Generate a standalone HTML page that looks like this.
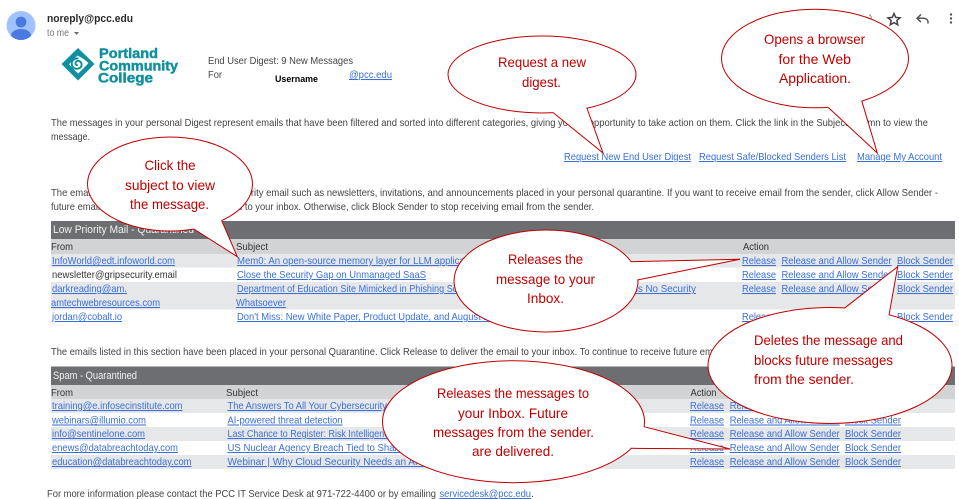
<!DOCTYPE html>
<html><head><meta charset="utf-8"><style>
html,body{margin:0;padding:0;background:#fff;width:959px;height:499px;overflow:hidden}
svg{display:block;filter:blur(.3px)}
text{font-family:"Liberation Sans",Arial,sans-serif;font-size:10.4px;fill:#444}
.l{fill:#3a6fd8;text-decoration:underline}
.d{fill:#333}
.c{font-size:13.6px;fill:#c00000}
.w{fill:#f2f2f2;font-size:10.6px}
.s{fill:#fff;stroke:#c00000;stroke-width:1}
.f{fill:#fff;stroke:none}
.t{fill:none;stroke:#c00000;stroke-width:1}
.g{font-size:14px;font-weight:bold;fill:#10909f;stroke:#10909f;stroke-width:.45px}
</style></head><body>
<svg width="959" height="499" viewBox="0 0 959 499" xmlns="http://www.w3.org/2000/svg">
<!-- gmail header -->
<clipPath id="av"><circle cx="21" cy="25.5" r="14.5"/></clipPath>
<circle cx="21" cy="25.5" r="14.5" fill="#a0c3ff"/>
<g clip-path="url(#av)" fill="#4a79e0"><circle cx="21" cy="22" r="5.4"/><ellipse cx="21" cy="35.5" rx="10" ry="6.5"/></g>
<text x="47" y="22" style="font-size:11.2px;font-weight:bold;fill:#2a2a2a" textLength="86" lengthAdjust="spacingAndGlyphs">noreply@pcc.edu</text>
<text x="47" y="36" style="font-size:9.8px;fill:#777" textLength="22" lengthAdjust="spacingAndGlyphs">to me</text>
<path d="M74 32h5l-2.5 2.8z" fill="#666"/>
<path d="M894 13.5l1.7 3.9 4.3.4-3.2 2.8 1 4.2-3.8-2.2-3.8 2.2 1-4.2-3.2-2.8 4.3-.4z" fill="none" stroke="#444" stroke-width="1.5"/>
<path d="M928 23.5v-1.2c0-2.6-2-4-4.500-4h-6M921 14.500l-4 3.800 4 3.800" fill="none" stroke="#555" stroke-width="1.500"/>
<g fill="#555"><circle cx="951" cy="14.500" r="1.200"/><circle cx="951" cy="18.500" r="1.200"/><circle cx="951" cy="22.500" r="1.200"/></g>
<path d="M869 14.500c2 1 2.600 2.500 2 4.500" fill="none" stroke="#888"/>
<!-- logo -->
<path d="M78 48L94.500 64 78 80.500 61.500 64z" fill="#10909f"/>
<path d="M77.500 55.500c2.800 1.600 5 2.800 6.800 4 1.800 1.200 3 2.300 4.200 3.800-1.300 1.300-3 3-4.800 4.800-2 2-3.800 3.700-5.400 5.400-2.800-2.300-6-5.500-9.300-9.200 2.800-3 5.500-6 8.500-8.800z" fill="#fff"/>
<path d="M78.500 58.500c-3.500-.6-6.700 1.500-6.800 5 0 3.200 2.500 5.500 5.500 5.300 3-.2 4.800-2.500 4.300-5-.4-2-2.200-3.300-4-2.900-1.700.4-2.400 2-1.900 3.200.4 1 1.500 1.300 2.200.7" fill="none" stroke="#10909f" stroke-width="1.900"/>
<text x="99" y="58" class="g" textLength="59" lengthAdjust="spacingAndGlyphs">Portland</text>
<text x="99" y="70.500" class="g" textLength="79" lengthAdjust="spacingAndGlyphs">Community</text>
<text x="98" y="82.500" class="g" textLength="55" lengthAdjust="spacingAndGlyphs">College</text>
<text x="208" y="64" textLength="145" lengthAdjust="spacingAndGlyphs">End User Digest: 9 New Messages</text>
<text x="208" y="78" textLength="14" lengthAdjust="spacingAndGlyphs">For</text>
<text x="275" y="82" style="font-weight:bold;fill:#000;font-size:9.500px" textLength="43" lengthAdjust="spacingAndGlyphs">Username</text>
<text x="349" y="78" class="l" textLength="43" lengthAdjust="spacingAndGlyphs">@pcc.edu</text>
<!-- paragraph 1 -->
<text x="51" y="126" textLength="877" lengthAdjust="spacingAndGlyphs">The messages in your personal Digest represent emails that have been filtered and sorted into different categories, giving you an opportunity to take action on them. Click the link in the Subject column to view the</text>
<text x="51" y="140" textLength="39" lengthAdjust="spacingAndGlyphs">message.</text>
<text x="564" y="160" class="l" textLength="127" lengthAdjust="spacingAndGlyphs">Request New End User Digest</text>
<text x="699" y="160" class="l" textLength="147" lengthAdjust="spacingAndGlyphs">Request Safe/Blocked Senders List</text>
<text x="857" y="160" class="l" textLength="85" lengthAdjust="spacingAndGlyphs">Manage My Account</text>
<!-- paragraph 2 -->
<text x="51" y="196" textLength="887" lengthAdjust="spacingAndGlyphs">The emails listed in this section contain low priority email such as newsletters, invitations, and announcements placed in your personal quarantine. If you want to receive email from the sender, click Allow Sender -</text>
<text x="51" y="210" textLength="543" lengthAdjust="spacingAndGlyphs">future emails from the sender will be delivered to your inbox. Otherwise, click Block Sender to stop receiving email from the sender.</text>
<!-- table 1 -->
<rect x="51" y="221" width="904" height="18" fill="#6d6e71"/>
<rect x="51" y="239" width="904" height="15" fill="#d1d3d4"/>
<rect x="51" y="254" width="904" height="13.500" fill="#e6e7e8"/>
<rect x="51" y="282" width="904" height="27.500" fill="#e6e7e8"/>
<text x="53" y="233" class="w" textLength="141" lengthAdjust="spacingAndGlyphs">Low Priority Mail - Quarantined</text>
<text x="51" y="250" class="d" textLength="22" lengthAdjust="spacingAndGlyphs">From</text>
<text x="236" y="250" class="d" textLength="32" lengthAdjust="spacingAndGlyphs">Subject</text>
<text x="743" y="250" class="d" textLength="26" lengthAdjust="spacingAndGlyphs">Action</text>
<text x="52" y="264" class="l" textLength="123" lengthAdjust="spacingAndGlyphs">InfoWorld@edt.infoworld.com</text>
<text x="52" y="278" class="d" textLength="125" lengthAdjust="spacingAndGlyphs">newsletter@gripsecurity.email</text>
<text x="52" y="292" class="l" textLength="75" lengthAdjust="spacingAndGlyphs">darkreading@am.</text>
<text x="51" y="306" class="l" textLength="109" lengthAdjust="spacingAndGlyphs">amtechwebresources.com</text>
<text x="52" y="320" class="l" textLength="70" lengthAdjust="spacingAndGlyphs">jordan@cobalt.io</text>
<text x="237" y="264" class="l" textLength="248" lengthAdjust="spacingAndGlyphs">Mem0: An open-source memory layer for LLM applications</text>
<text x="237" y="278" class="l" textLength="189" lengthAdjust="spacingAndGlyphs">Close the Security Gap on Unmanaged SaaS</text>
<text x="237" y="292" class="l" textLength="233" lengthAdjust="spacingAndGlyphs">Department of Education Site Mimicked in Phishing Scam</text>
<text x="633" y="292" class="l" textLength="63" lengthAdjust="spacingAndGlyphs">ss No Security</text>
<text x="236" y="306" class="l" textLength="50" lengthAdjust="spacingAndGlyphs">Whatsoever</text>
<text x="237" y="320" class="l" textLength="275" lengthAdjust="spacingAndGlyphs">Don't Miss: New White Paper, Product Update, and August Events</text>
<text x="742" y="264" class="l" textLength="34" lengthAdjust="spacingAndGlyphs">Release</text><text x="781.500" y="264" class="l" textLength="110" lengthAdjust="spacingAndGlyphs">Release and Allow Sender</text><text x="897" y="264" class="l" textLength="56" lengthAdjust="spacingAndGlyphs">Block Sender</text>
<text x="742" y="278" class="l" textLength="34" lengthAdjust="spacingAndGlyphs">Release</text><text x="781.500" y="278" class="l" textLength="110" lengthAdjust="spacingAndGlyphs">Release and Allow Sender</text><text x="897" y="278" class="l" textLength="56" lengthAdjust="spacingAndGlyphs">Block Sender</text>
<text x="742" y="292" class="l" textLength="34" lengthAdjust="spacingAndGlyphs">Release</text><text x="781.500" y="292" class="l" textLength="110" lengthAdjust="spacingAndGlyphs">Release and Allow Sender</text><text x="897" y="292" class="l" textLength="56" lengthAdjust="spacingAndGlyphs">Block Sender</text>
<text x="742" y="320" class="l" textLength="34" lengthAdjust="spacingAndGlyphs">Release</text><text x="781.500" y="320" class="l" textLength="110" lengthAdjust="spacingAndGlyphs">Release and Allow Sender</text><text x="897" y="320" class="l" textLength="56" lengthAdjust="spacingAndGlyphs">Block Sender</text>
<!-- paragraph 3 -->
<text x="51" y="355" textLength="850" lengthAdjust="spacingAndGlyphs">The emails listed in this section have been placed in your personal Quarantine. Click Release to deliver the email to your inbox. To continue to receive future emails from this sender, click Release and Allow.</text>
<!-- table 2 -->
<rect x="51" y="366.500" width="904" height="18.500" fill="#6d6e71"/>
<rect x="51" y="385" width="904" height="14" fill="#d1d3d4"/>
<rect x="51" y="399" width="904" height="14" fill="#e6e7e8"/>
<rect x="51" y="427" width="904" height="14" fill="#e6e7e8"/>
<rect x="51" y="455" width="904" height="14" fill="#e6e7e8"/>
<text x="53" y="379" class="w" textLength="84" lengthAdjust="spacingAndGlyphs">Spam - Quarantined</text>
<text x="51" y="396" class="d" textLength="22" lengthAdjust="spacingAndGlyphs">From</text>
<text x="226" y="396" class="d" textLength="32" lengthAdjust="spacingAndGlyphs">Subject</text>
<text x="690.500" y="396" class="d" textLength="26" lengthAdjust="spacingAndGlyphs">Action</text>
<text x="52" y="409" class="l" textLength="130.500" lengthAdjust="spacingAndGlyphs">training@e.infosecinstitute.com</text>
<text x="52" y="423.500" class="l" textLength="94" lengthAdjust="spacingAndGlyphs">webinars@illumio.com</text>
<text x="52" y="437" class="l" textLength="93" lengthAdjust="spacingAndGlyphs">info@sentinelone.com</text>
<text x="52" y="451" class="l" textLength="126" lengthAdjust="spacingAndGlyphs">enews@databreachtoday.com</text>
<text x="52" y="465" class="l" textLength="139.500" lengthAdjust="spacingAndGlyphs">education@databreachtoday.com</text>
<text x="227.500" y="409" class="l" textLength="204" lengthAdjust="spacingAndGlyphs">The Answers To All Your Cybersecurity Questions</text>
<text x="227.500" y="423.500" class="l" textLength="115" lengthAdjust="spacingAndGlyphs">AI-powered threat detection</text>
<text x="227.500" y="437" class="l" textLength="199" lengthAdjust="spacingAndGlyphs">Last Chance to Register: Risk Intelligence Summit</text>
<text x="227.500" y="451" class="l" textLength="225" lengthAdjust="spacingAndGlyphs">US Nuclear Agency Breach Tied to SharePoint Flaws</text>
<text x="227.500" y="465" class="l" textLength="258" lengthAdjust="spacingAndGlyphs">Webinar | Why Cloud Security Needs an AI-First Approach</text>
<text x="690" y="409" class="l" textLength="34" lengthAdjust="spacingAndGlyphs">Release</text><text x="729.700" y="409" class="l" textLength="110" lengthAdjust="spacingAndGlyphs">Release and Allow Sender</text><text x="845" y="409" class="l" textLength="56" lengthAdjust="spacingAndGlyphs">Block Sender</text>
<text x="690" y="423.500" class="l" textLength="34" lengthAdjust="spacingAndGlyphs">Release</text><text x="729.700" y="423.500" class="l" textLength="110" lengthAdjust="spacingAndGlyphs">Release and Allow Sender</text><text x="845" y="423.500" class="l" textLength="56" lengthAdjust="spacingAndGlyphs">Block Sender</text>
<text x="690" y="437" class="l" textLength="34" lengthAdjust="spacingAndGlyphs">Release</text><text x="729.700" y="437" class="l" textLength="110" lengthAdjust="spacingAndGlyphs">Release and Allow Sender</text><text x="845" y="437" class="l" textLength="56" lengthAdjust="spacingAndGlyphs">Block Sender</text>
<text x="690" y="451" class="l" textLength="34" lengthAdjust="spacingAndGlyphs">Release</text><text x="729.700" y="451" class="l" textLength="110" lengthAdjust="spacingAndGlyphs">Release and Allow Sender</text><text x="845" y="451" class="l" textLength="56" lengthAdjust="spacingAndGlyphs">Block Sender</text>
<text x="690" y="465" class="l" textLength="34" lengthAdjust="spacingAndGlyphs">Release</text><text x="729.700" y="465" class="l" textLength="110" lengthAdjust="spacingAndGlyphs">Release and Allow Sender</text><text x="845" y="465" class="l" textLength="56" lengthAdjust="spacingAndGlyphs">Block Sender</text>
<!-- footer -->
<text x="47" y="497" textLength="389" lengthAdjust="spacingAndGlyphs">For more information please contact the PCC IT Service Desk at 971-722-4400 or by emailing</text>
<text x="439.500" y="497" class="l" textLength="91.500" lengthAdjust="spacingAndGlyphs">servicedesk@pcc.edu</text>
<text x="531" y="497">.</text>
<!-- callouts: ellipse, white cover wedge, tail strokes -->
<ellipse class="s" cx="542" cy="74.500" rx="94" ry="38.500"/>
<path class="f" d="M553 112.500L603 153 586.700 107.500 542 74.500z"/>
<path class="t" d="M553 112.500L603 153 586.700 107.500"/>
<ellipse class="s" cx="815" cy="58.500" rx="93.500" ry="49.300"/>
<path class="f" d="M828.300 107.500L877.300 153 861.700 100.700 815 58.500z"/>
<path class="t" d="M828.300 107.500L877.300 153 861.700 100.700"/>
<ellipse class="s" cx="170" cy="184" rx="82.500" ry="47"/>
<path class="f" d="M194.300 229.300L237.300 256.700 221.700 220.700 170 184z"/>
<path class="t" d="M194.300 229.300L237.300 256.700 221.700 220.700"/>
<ellipse class="s" cx="546" cy="281" rx="92" ry="51"/>
<path class="f" d="M630.700 261.700L740 259.300 637.300 280 546 281z"/>
<path class="t" d="M630.700 261.700L740 259.300 637.300 280"/>
<ellipse class="s" cx="830" cy="365.500" rx="122" ry="58"/>
<path class="f" d="M844.300 308.300L897.700 266.700 889 315 830 365.500z"/>
<path class="t" d="M844.300 308.300L897.700 266.700 889 315"/>
<ellipse class="s" cx="513.500" cy="421.700" rx="131" ry="61"/>
<path class="f" d="M644 426.700L730 449 630.700 448.300 513.500 421.700z"/>
<path class="t" d="M644 426.700L730 449 630.700 448.300"/>
<text x="498" y="67" class="c" textLength="88" lengthAdjust="spacingAndGlyphs">Request a new</text>
<text x="522" y="87" class="c" textLength="39" lengthAdjust="spacingAndGlyphs">digest.</text>
<text x="764" y="44" class="c" textLength="101" lengthAdjust="spacingAndGlyphs">Opens a browser</text>
<text x="778.500" y="64" class="c" textLength="72.500" lengthAdjust="spacingAndGlyphs">for the Web</text>
<text x="779" y="83" class="c" textLength="72" lengthAdjust="spacingAndGlyphs">Application.</text>
<text x="144.500" y="170" class="c" textLength="51" lengthAdjust="spacingAndGlyphs">Click the</text>
<text x="125" y="190" class="c" textLength="90" lengthAdjust="spacingAndGlyphs">subject to view</text>
<text x="130" y="209" class="c" textLength="79" lengthAdjust="spacingAndGlyphs">the message.</text>
<text x="508" y="264" class="c" textLength="75" lengthAdjust="spacingAndGlyphs">Releases the</text>
<text x="496" y="284" class="c" textLength="99" lengthAdjust="spacingAndGlyphs">message to your</text>
<text x="527" y="303" class="c" textLength="37" lengthAdjust="spacingAndGlyphs">Inbox.</text>
<text x="754" y="345" class="c" textLength="149" lengthAdjust="spacingAndGlyphs">Deletes the message and</text>
<text x="754" y="365" class="c" textLength="139" lengthAdjust="spacingAndGlyphs">blocks future messages</text>
<text x="754" y="384" class="c" textLength="100" lengthAdjust="spacingAndGlyphs">from the sender.</text>
<text x="437" y="398" class="c" textLength="152" lengthAdjust="spacingAndGlyphs">Releases the messages to</text>
<text x="458" y="418" class="c" textLength="110" lengthAdjust="spacingAndGlyphs">your Inbox. Future</text>
<text x="433" y="437" class="c" textLength="161" lengthAdjust="spacingAndGlyphs">messages from the sender.</text>
<text x="472" y="456" class="c" textLength="82" lengthAdjust="spacingAndGlyphs">are delivered.</text>
</svg>
</body></html>
